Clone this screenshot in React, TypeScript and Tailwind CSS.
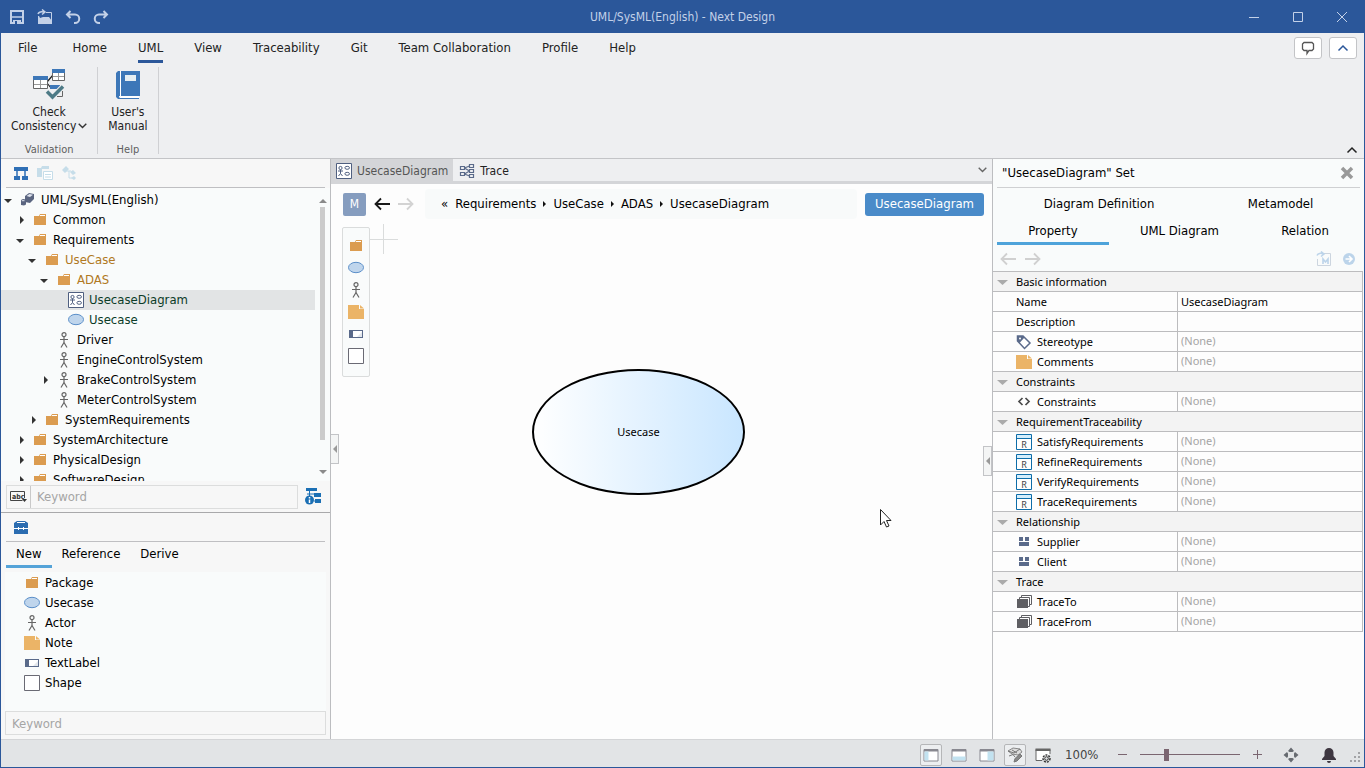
import type { ReactNode } from "react";
import clsx from "clsx";

type IconName =
  | "package"
  | "usecase"
  | "actor"
  | "note"
  | "label"
  | "shape"
  | "diagram"
  | "model"
  | "tag"
  | "code"
  | "requirement"
  | "relation"
  | "stack";

const Svg = ({ size = 16, children }: { size?: number; children: ReactNode }) => (
  <svg width={size} height={size} viewBox={`0 0 ${size} ${size}`} fill="none" className="shrink-0" aria-hidden="true">
    {children}
  </svg>
);

const icons: Record<IconName, ReactNode> = {
  package: (
    <>
      <path d="M2 4h5l1-2h6v11H2z" fill="#db9c50" />
      <path d="M8 3.5h5" stroke="#fff" />
    </>
  ),
  usecase: <ellipse cx="8" cy="7.5" rx="7.5" ry="5.2" fill="#bfd5ec" stroke="#5b8fc9" />,
  actor: (
    <g stroke="#666" strokeWidth="1.2">
      <circle cx="8" cy="2.7" r="2" />
      <path d="M8 5v5.5M4 7.5h8M8 10.5L5 15.5M8 10.5l3 5" />
    </g>
  ),
  note: (
    <>
      <path d="M0 1h11v4h5v10H0z" fill="#ebb467" />
      <path d="M12 1l4 3.500h-4z" fill="#ebb467" />
    </>
  ),
  label: (
    <>
      <path d="M1 4h14v8H1z" fill="#5a6a8a" />
      <path d="M5 5h9v6H5z" fill="#fff" />
      <path d="M14 6v5H9z" fill="#e3e7ec" />
    </>
  ),
  shape: <path d="M.5.5h15v15H.5z" fill="#fff" stroke="#6a6a74" />,
  diagram: (
    <g stroke="#4f5f80">
      <path d="M.5.5h15v15H.5z" fill="#fff" />
      <circle cx="4.500" cy="5" r="1.600" />
      <path d="M4.500 6.500v4M2 8h5M4.500 10.500L2.500 13M4.500 10.500l2 2.500" />
      <ellipse cx="11.200" cy="4.800" rx="2.300" ry="1.500" />
      <ellipse cx="11.200" cy="10.800" rx="2.300" ry="1.500" />
    </g>
  ),
  model: (
    <>
      <path d="M5 4l4-3 5 1v5l-4 4-5-1z" fill="#5a6580" />
      <path d="M6.500 4l3-2 3.500.8L10 5z" fill="#dfe4ee" />
      <path d="M1 8l2-1 3 .5v5L4 13.500l-3-.5z" fill="#5a6580" />
      <path d="M1.800 8.700h2.700" stroke="#dfe4ee" />
    </>
  ),
  tag: (
    <>
      <path d="M1.500 2v5l7 7.500 5.500-5.500-7-7z" fill="#fff" stroke="#5a6a8a" strokeWidth="1.500" />
      <path d="M1.500 2v5l2 2L8.500 3.500 7 2z" fill="#5a6a8a" />
      <circle cx="4" cy="4.500" r="1" fill="#fff" />
    </>
  ),
  code: <path d="M6.500 4L3 7.500 6.500 11M9.500 4L13 7.500 9.500 11" stroke="#4a4a4a" strokeWidth="1.700" />,
  requirement: (
    <>
      <path d="M.5.5h15v15H.5z" fill="#fff" stroke="#0e6da8" />
      <path d="M1 1h14v3.500H1z" fill="#d4eefc" />
      <path d="M1 4.500h14" stroke="#0e6da8" />
      <text x="8" y="14" textAnchor="middle" fontSize="9" fill="#444">
        R
      </text>
    </>
  ),
  relation: <path d="M3 3h4v4H3zM9 3h4v4H9zM3 8h10v4H3z" fill="#5a6a8a" />,
  stack: (
    <>
      <path d="M5.500 3V1.500h10v9H14" stroke="#5f5f63" />
      <path d="M3.500 5V3.500h10v9H12" stroke="#5f5f63" />
      <path d="M1 5h11v9H1z" fill="#5f5f63" />
    </>
  ),
};

const Icon = ({ name }: { name: IconName }) => <Svg>{icons[name]}</Svg>;

const menus = ["File", "Home", "UML", "View", "Traceability", "Git", "Team Collaboration", "Profile", "Help"];

type Node = {
  name: string;
  depth: number;
  icon: IconName;
  open?: boolean;
  tone?: string;
  selected?: boolean;
};

const tree: Node[] = [
  { name: "UML/SysML(English)", depth: 0, icon: "model", open: true },
  { name: "Common", depth: 1, icon: "package", open: false },
  { name: "Requirements", depth: 1, icon: "package", open: true },
  { name: "UseCase", depth: 2, icon: "package", open: true, tone: "text-[#b07822]" },
  { name: "ADAS", depth: 3, icon: "package", open: true, tone: "text-[#b07822]" },
  { name: "UsecaseDiagram", depth: 4, icon: "diagram", tone: "text-[#0c3c28]", selected: true },
  { name: "Usecase", depth: 4, icon: "usecase", tone: "text-[#0c3c28]" },
  { name: "Driver", depth: 3, icon: "actor" },
  { name: "EngineControlSystem", depth: 3, icon: "actor" },
  { name: "BrakeControlSystem", depth: 3, icon: "actor", open: false },
  { name: "MeterControlSystem", depth: 3, icon: "actor" },
  { name: "SystemRequirements", depth: 2, icon: "package", open: false },
  { name: "SystemArchitecture", depth: 1, icon: "package", open: false },
  { name: "PhysicalDesign", depth: 1, icon: "package", open: false },
  { name: "SoftwareDesign", depth: 1, icon: "package", open: false },
];

const indents = ["pl-0", "pl-3", "pl-6", "pl-9", "pl-12"];

const tools: { name: string; icon: IconName }[] = [
  { name: "Package", icon: "package" },
  { name: "Usecase", icon: "usecase" },
  { name: "Actor", icon: "actor" },
  { name: "Note", icon: "note" },
  { name: "TextLabel", icon: "label" },
  { name: "Shape", icon: "shape" },
];

const groups: { title: string; rows: { name: string; icon?: IconName; value?: string }[] }[] = [
  {
    title: "Basic information",
    rows: [
      { name: "Name", value: "UsecaseDiagram" },
      { name: "Description", value: "" },
      { name: "Stereotype", icon: "tag" },
      { name: "Comments", icon: "note" },
    ],
  },
  { title: "Constraints", rows: [{ name: "Constraints", icon: "code" }] },
  {
    title: "RequirementTraceability",
    rows: [
      { name: "SatisfyRequirements", icon: "requirement" },
      { name: "RefineRequirements", icon: "requirement" },
      { name: "VerifyRequirements", icon: "requirement" },
      { name: "TraceRequirements", icon: "requirement" },
    ],
  },
  {
    title: "Relationship",
    rows: [
      { name: "Supplier", icon: "relation" },
      { name: "Client", icon: "relation" },
    ],
  },
  {
    title: "Trace",
    rows: [
      { name: "TraceTo", icon: "stack" },
      { name: "TraceFrom", icon: "stack" },
    ],
  },
];

const Arrow = ({ back, color }: { back?: boolean; color: string }) => (
  <Svg>
    <path
      d={back ? "M16 8H1.500M7 2.500L1.500 8 7 13.500" : "M0 8h14.500M9 2.500L14.500 8 9 13.500"}
      stroke={color}
      strokeWidth="1.800"
    />
  </Svg>
);

const TitleBar = () => (
  <header className="grid h-[33px] shrink-0 grid-cols-3 items-center bg-[#2b579a] text-[#c3d1e8]">
    <div className="flex gap-3 pl-2">
      <button aria-label="Save">
        <Svg>
          <path d="M2 2h12v12H2z" stroke="currentColor" strokeWidth="2" />
          <path d="M2 8h12" stroke="currentColor" strokeWidth="1.500" />
          <path d="M4 11h8v4H4z" fill="currentColor" />
          <path d="M6 12h2v3H6z" fill="#2b579a" />
        </Svg>
      </button>
      <button aria-label="Open">
        <Svg>
          <path d="M9 3.500h5.500V14" stroke="currentColor" />
          <path d="M1 7h1l1 2 3-1h6l3 4v3H1z" fill="currentColor" />
          <path d="M1 5C2 2.500 5 2.500 7 3M5 .5L8 3 5 5.500" stroke="currentColor" strokeWidth="1.500" />
        </Svg>
      </button>
      <button aria-label="Undo">
        <Svg>
          <path d="M5.500 2L2 5.500 5.500 9M2 5.500h8a4 4 0 0 1 0 8.500H9" stroke="currentColor" strokeWidth="2" />
        </Svg>
      </button>
      <button aria-label="Redo">
        <Svg>
          <path d="M10.500 2L14 5.500 10.500 9M14 5.500H6a4 4 0 0 0 0 8.500h1" stroke="currentColor" strokeWidth="2" />
        </Svg>
      </button>
    </div>
    <h1 className="text-center text-xs">UML/SysML(English) - Next Design</h1>
    <div className="flex justify-end gap-7 pr-[14px]">
      <button aria-label="Minimize">
        <Svg>
          <path d="M3 8.500h10" stroke="currentColor" />
        </Svg>
      </button>
      <button aria-label="Maximize">
        <Svg>
          <path d="M3.500 3.500h9v9h-9z" stroke="currentColor" />
        </Svg>
      </button>
      <button aria-label="Close">
        <Svg>
          <path d="M3 3l10 10M13 3L3 13" stroke="currentColor" />
        </Svg>
      </button>
    </div>
  </header>
);

const RibbonGroup = ({ label, children }: { label: string; children: ReactNode }) => (
  <div className="flex flex-col items-center justify-between border-r border-[#cfd0d3] px-[10px] text-xs leading-[14px] text-[#222]">
    {children}
    <span className="text-[11px] leading-[8px] text-[#5f5f5f]">{label}</span>
  </div>
);

const Ribbon = () => (
  <section className="shrink-0 border-b border-[#c3c4c7] bg-[#eeeff1]">
    <div className="flex h-[34px] justify-between pr-[7px]">
      <nav className="flex gap-[31px] pl-[17px] text-[13px] text-[#222]">
        {menus.map((menu) => (
          <button
            key={menu}
            className={clsx(
              "h-[30px] border-b-[3px] pt-[2px] first:mr-1",
              menu === "UML" ? "border-[#2b579a]" : "border-transparent"
            )}
          >
            {menu}
          </button>
        ))}
      </nav>
      <div className="flex gap-[7px] pt-1">
        <button aria-label="Feedback" className="flex h-[22px] w-7 items-center justify-center rounded-[3px] border border-[#c3c4c7] bg-white">
          <Svg>
            <path d="M4 2.500h8l1.500 1.500v5L12 10.500H9L7 13.500v-3H4L2.500 9V4z" stroke="#555" strokeWidth="1.300" />
          </Svg>
        </button>
        <button aria-label="Fold menu" className="flex h-[22px] w-7 items-center justify-center rounded-[3px] border border-[#c3c4c7] bg-white">
          <Svg>
            <path d="M3.500 10.500L8 6l4.500 4.500" stroke="#2b579a" strokeWidth="1.500" />
          </Svg>
        </button>
      </div>
    </div>
    <div className="flex items-end justify-between">
      <div className="mb-1 flex h-[87px]">
        <RibbonGroup label="Validation">
          <button className="flex flex-col items-center">
            <svg width="34" height="32" viewBox="0 0 34 32" fill="none" className="mt-[2px] mb-1" aria-hidden="true">
              <path d="M15 13l6-7M15 14l4 5" stroke="#222" strokeWidth="1.200" />
              <path d="M1.500 7.500h14v12h-14z" fill="#fff" stroke="#666" />
              <path d="M1 7h15v4H1z" fill="#3d77b8" />
              <path d="M8.500 11v8M2 15.500h13" stroke="#999" />
              <path d="M20.500.5h12v11h-12z" fill="#fff" stroke="#666" />
              <path d="M20 0h13v4H20z" fill="#3d77b8" />
              <path d="M26.500 4v7M21 7.500h11" stroke="#999" />
              <path d="M18 16h10v4H18z" fill="#3d77b8" />
              <path d="M30.500 22v5.500H25" stroke="#666" />
              <path d="M15 22l5.500 6L30.500 17.500" stroke="#eeeff1" strokeWidth="5" />
              <path d="M15 22.500l5.500 5.500L31 17.500" stroke="#4d7a86" strokeWidth="3.500" />
            </svg>
            <span>Check</span>
            <span className="flex items-center gap-[2px]">
              Consistency
              <svg width="9" height="6" viewBox="0 0 9 6" fill="none" aria-hidden="true">
                <path d="M.7.7L4.500 4.500 8.300.7" stroke="#333" strokeWidth="1.400" />
              </svg>
            </span>
          </button>
        </RibbonGroup>
        <RibbonGroup label="Help">
          <button className="flex flex-col items-center">
            <svg width="24" height="28" viewBox="0 0 24 28" fill="none" className="mt-1 mb-[6px]" aria-hidden="true">
              <path d="M2 0h22v25H3v1h20v2H2l-2-2V2z" fill="#3d77b8" />
              <path d="M5 25h18v2H3z" fill="#fff" />
              <path d="M4.500 0v25" stroke="#fff" />
              <path d="M9 4h11v6H9z" fill="#e6eef2" />
            </svg>
            <span>User's</span>
            <span>Manual</span>
          </button>
        </RibbonGroup>
      </div>
      <button aria-label="Collapse ribbon" className="mr-1">
        <Svg>
          <path d="M3.500 10.500L8 6l4.500 4.500" stroke="#222" strokeWidth="1.500" />
        </Svg>
      </button>
    </div>
  </section>
);

const Toggle = ({ open }: { open: boolean }) => (
  <button aria-label={open ? "Collapse" : "Expand"} className="flex w-[14px] justify-center">
    <svg width="14" height="8" viewBox="0 0 14 8" aria-hidden="true">
      <path d={open ? "M3 3h8L7 7z" : "M7 0v8l4-4z"} fill="#333" />
    </svg>
  </button>
);

const ModelTree = () => (
  <section className="flex min-h-0 flex-1 flex-col">
    <div className="mx-[5px] flex h-[29px] shrink-0 items-center gap-2 border-b border-[#bfbfc2] pl-[7px]">
      <button aria-label="Structure">
        <Svg>
          <path d="M1 2h14v4H1zM1 11h6v4H1zM9 11h6v4H9z" fill="#2f6fb5" />
          <path d="M4 6v5M12 6v5" stroke="#2f6fb5" strokeWidth="1.500" />
        </Svg>
      </button>
      <button aria-label="Pages">
        <Svg>
          <path d="M0 3h4l1-2h7v3H5v8H0z" fill="#c6dde9" />
          <path d="M6.500 6.500h9v8h-9z" fill="#fff" stroke="#c6dde9" />
          <path d="M8 9.500h6M8 12h6" stroke="#c6dde9" />
        </Svg>
      </button>
      <button aria-label="Links">
        <Svg>
          <path d="M1 5l4-4 3 3-4 4zM9 7l3-2 3 3-3 2zM10 13l3-2 2 2-2 2z" fill="#c6dde9" />
          <path d="M5 6h5M8 6v7h3" stroke="#c6dde9" />
        </Svg>
      </button>
    </div>
    <div className="flex min-h-0 flex-1 bg-[#f9fbfb] pt-[2px]">
      <ul className="min-w-0 flex-1 overflow-hidden text-[13px] leading-5">
        {tree.map((node) => (
          <li
            key={node.name}
            className={clsx(
              "flex h-5 items-center gap-[5px]",
              indents[node.depth],
              node.selected && "bg-[#e2e4e5]",
              node.tone ?? "text-black"
            )}
          >
            {node.open === undefined ? <span className="w-[14px]" /> : <Toggle open={node.open} />}
            <Icon name={node.icon} />
            <span>{node.name}</span>
          </li>
        ))}
      </ul>
      <div className="flex w-[15px] flex-col items-center pt-1 pb-[2px]">
        <svg width="8" height="5" viewBox="0 0 8 5" className="mt-1" aria-hidden="true">
          <path d="M0 5l4-4 4 4z" fill="#8a8a8a" />
        </svg>
        <div className="mt-1 mb-[30px] w-[5px] flex-1 bg-[#cbcbcb]" />
        <svg width="8" height="5" viewBox="0 0 8 5" className="mb-1" aria-hidden="true">
          <path d="M0 0h8L4 4z" fill="#8a8a8a" />
        </svg>
      </div>
    </div>
    <div className="flex h-[31px] shrink-0 items-center gap-[7px] px-[5px]">
      <div className="flex h-6 min-w-0 flex-1 items-center border border-[#dcdddd]">
        <button aria-label="Match mode" className="flex h-full w-6 items-center justify-center border-r border-[#c9c9c9]">
          <svg width="17" height="12" viewBox="0 0 17 12" fill="none" aria-hidden="true">
            <path d="M14.500 7V.5H.5v9h12" stroke="#444" />
            <text x="2" y="8" fontSize="7" fontWeight="700" fill="#333">
              abc
            </text>
            <path d="M12 8h5l-2.500 3z" fill="#333" />
          </svg>
        </button>
        <input
          aria-label="Search model"
          placeholder="Keyword"
          className="min-w-0 flex-1 bg-transparent px-[6px] text-[13px] outline-none placeholder:text-[#a5a5a5]"
        />
      </div>
      <button aria-label="Search options" className="mr-[3px]">
        <svg width="17" height="17" viewBox="0 0 17 17" fill="none" aria-hidden="true">
          <path d="M1 0h11v3H1zM9 5h7v4H9zM10 11h6v4h-6z" fill="#1b6fb4" />
          <path d="M4.500 3v5M2 6h7M9 13h2" stroke="#1b6fb4" />
          <circle cx="4.500" cy="12" r="4.500" fill="#1b6fb4" />
          <path d="M4.500 9v1.500M4.500 11.500v3.500" stroke="#fff" strokeWidth="1.500" />
        </svg>
      </button>
    </div>
  </section>
);

const Toolbox = () => (
  <section className="flex h-[227px] shrink-0 flex-col border-t border-[#a9a9ab] px-1">
    <div className="mx-px flex h-[29px] shrink-0 items-center border-b border-[#bfbfc2] pl-[7px]">
      <button aria-label="Toolbox">
        <Svg>
          <path d="M1 4l3-2h8l3 2v11H1z" fill="#2b6cb0" />
          <path d="M4 3.500h8M1 9.500h14" stroke="#fff" />
          <path d="M5.500 8v3M10.500 8v3" stroke="#fff" />
        </Svg>
      </button>
    </div>
    <div className="mx-px flex h-[30px] shrink-0 text-[13px] leading-5">
      <button className="h-[26px] border-b-[3px] border-[#55a3d8] px-[10px]">New</button>
      <button className="h-[26px] border-b-[3px] border-transparent px-[10px]">Reference</button>
      <button className="h-[26px] border-b-[3px] border-transparent px-[10px]">Derive</button>
    </div>
    <ul className="flex-1 bg-[#f9fbfb] pt-px text-[13px] leading-5">
      {tools.map((tool) => (
        <li key={tool.name} className="flex h-5 items-center gap-[5px] pl-[19px]">
          <Icon name={tool.icon} />
          {tool.name}
        </li>
      ))}
    </ul>
    <input
      aria-label="Search toolbox"
      placeholder="Keyword"
      className="mb-1 h-6 border border-[#dcdddd] bg-[#f7f7f7] px-[6px] text-[13px] outline-none placeholder:text-[#a5a5a5]"
    />
  </section>
);

const crumbs = ["Requirements", "UseCase", "ADAS", "UsecaseDiagram"];

const Editor = () => (
  <main className="relative flex min-w-0 flex-1 flex-col bg-[#fdfdfd]">
    <div className="flex h-[25px] shrink-0 items-center justify-between border-b-[3px] border-[#d4d5d8] bg-[#eeeff1] pr-[5px]">
      <div className="flex h-full text-xs">
        <button className="flex items-center gap-[5px] bg-[#d4d5d8] px-[5px] pt-[2px] text-[#555]">
          <Icon name="diagram" />
          UsecaseDiagram
        </button>
        <button className="flex items-center gap-[5px] px-[6px] pt-[2px] text-[#222]">
          <Svg>
            <g stroke="#5a6a8a" strokeWidth="1.200">
              <path d="M1.500 3.500h4v3h-4zM1.500 9.500h4v3h-4zM10.500 1.500h4v3h-4zM10.500 6.500h4v3h-4zM10.500 11.500h4v3h-4z" />
              <path d="M5.500 5l5-2M5.500 5l5 3M5.500 11l5-3M5.500 11l5 2" />
            </g>
          </Svg>
          Trace
        </button>
      </div>
      <button aria-label="Tab list">
        <svg width="9" height="6" viewBox="0 0 9 6" fill="none" aria-hidden="true">
          <path d="M.7.7L4.500 4.500 8.300.7" stroke="#666" strokeWidth="1.400" />
        </svg>
      </button>
    </div>

    <div className="flex h-10 shrink-0 items-center gap-2 px-2 pl-3">
      <button className="h-[23px] w-[23px] rounded-[2px] bg-[#869dbf] text-xs text-white">M</button>
      <button aria-label="Back">
        <Arrow back color="#1a1a1a" />
      </button>
      <button aria-label="Forward">
        <Arrow color="#d3d3d3" />
      </button>
      <nav className="ml-[3px] flex h-[30px] min-w-0 flex-1 items-center gap-[7px] rounded bg-[#f8fafa] pl-4 text-[13px]">
        <span>«</span>
        {crumbs.map((crumb, i) => (
          <span key={crumb} className="flex items-center gap-[7px]">
            <a href="#">{crumb}</a>
            {i < crumbs.length - 1 && (
              <svg width="3" height="6" viewBox="0 0 3 6" aria-hidden="true">
                <path d="M0 0v6l3-3z" fill="#111" />
              </svg>
            )}
          </span>
        ))}
      </nav>
      <button className="h-[23px] rounded-[3px] bg-[#4a8bc9] px-[10px] text-[13px] text-white">UsecaseDiagram</button>
    </div>

    <div className="mt-[3px] ml-[11px] flex h-[150px] w-7 flex-col items-center gap-[6px] rounded-[2px] border border-[#dadcdc] bg-[#f9fbfb] pt-[10px]">
      {tools.map((tool) => (
        <button key={tool.name} aria-label={tool.name} title={tool.name}>
          <Icon name={tool.icon} />
        </button>
      ))}
    </div>

    {/* canvas origin */}
    <div className="absolute top-[80px] left-[39px] h-px w-7 bg-[#dadcdc]" />
    <div className="absolute top-[65px] left-[52px] h-[30px] w-px bg-[#dadcdc]" />

    <div className="absolute top-[210px] left-[201px] flex h-[126px] w-[213px] items-center justify-center rounded-[50%] border-2 border-black bg-linear-to-r from-white to-[#c9e6ff] font-['Noto_Sans',sans-serif] text-[11px]">
      Usecase
    </div>

    <svg width="12" height="19" viewBox="0 0 12 19" className="absolute top-[350px] left-[549px]" aria-hidden="true">
      <path d="M.5.5v15.500l3.500-3.500 2.500 5.500 2.500-1-2.500-5.500h4.500z" fill="#fff" stroke="#222" />
    </svg>

    <button
      aria-label="Fold left panel"
      className="absolute top-[275px] left-0 flex h-[30px] w-2 items-center justify-center border border-l-0 border-[#c3c4c7] bg-[#f4f5f5]"
    >
      <svg width="4" height="8" viewBox="0 0 4 8" className="shrink-0" aria-hidden="true">
        <path d="M4 0v8L0 4z" fill="#999" />
      </svg>
    </button>
    <button
      aria-label="Fold right panel"
      className="absolute top-[287px] right-0 flex h-[30px] w-[9px] items-center justify-center border border-[#c3c4c7] bg-[#f4f5f5]"
    >
      <svg width="4" height="8" viewBox="0 0 4 8" className="shrink-0" aria-hidden="true">
        <path d="M4 0v8L0 4z" fill="#999" />
      </svg>
    </button>
  </main>
);

const Inspector = () => (
  <aside className="flex w-[372px] shrink-0 flex-col border-l border-[#bcbdc0] bg-[#f9fbfb]">
    <div className="mx-1 flex h-[29px] shrink-0 items-center justify-between border-b border-[#cfd0d2] pr-[6px] pl-[5px]">
      <h2 className="text-[13px]">"UsecaseDiagram" Set</h2>
      <button aria-label="Close panel">
        <svg width="14" height="14" viewBox="0 0 14 14" fill="none" aria-hidden="true">
          <path d="M2 2l10 10M12 2L2 12" stroke="#999" strokeWidth="3.500" />
        </svg>
      </button>
    </div>
    <div className="mx-1 flex h-8 shrink-0 text-[13px]">
      <button className="flex-auto">Diagram Definition</button>
      <button className="flex-auto">Metamodel</button>
    </div>
    <div className="mx-1 flex h-[25px] shrink-0 text-[13px] leading-5">
      <button className="flex-auto border-b-[3px] border-[#4ea3da]">Property</button>
      <button className="flex-auto border-b-[3px] border-transparent">UML Diagram</button>
      <button className="flex-auto border-b-[3px] border-transparent">Relation</button>
    </div>
    <div className="flex h-[26px] shrink-0 items-center justify-between px-[7px] pt-px">
      <div className="flex gap-[9px]">
        <button aria-label="Previous">
          <Arrow back color="#d0d0d0" />
        </button>
        <button aria-label="Next">
          <Arrow color="#d0d0d0" />
        </button>
      </div>
      <div className="flex gap-[9px]">
        <button aria-label="Open metamodel">
          <Svg>
            <path d="M8 2.500h6.500v12H1.500V8" stroke="#ccd5df" />
            <path d="M1 4.500C2 2 5 2 7 3M5 .5L8 3 5 5.500" stroke="#bcd4ea" strokeWidth="1.500" />
            <path d="M7 13V8l2.500 3L12 8v5" stroke="#bcd4ea" strokeWidth="1.600" />
          </Svg>
        </button>
        <button aria-label="Go to">
          <Svg>
            <circle cx="8" cy="8" r="6" fill="#bcd4ea" />
            <path d="M4.500 8h6M8 5l3 3-3 3" stroke="#fff" strokeWidth="1.600" />
          </Svg>
        </button>
      </div>
    </div>
    <div className="min-h-0 flex-1 bg-[#fdfdfd]">
      <table className="w-[370px] table-fixed border-separate border-spacing-0 border-t border-[#bcbcbe] font-['Noto_Sans',sans-serif] text-[11px]">
        {groups.map((group) => (
          <tbody key={group.title}>
            <tr>
              <th colSpan={2} className="h-5 border-r border-b border-[#bcbcbe] bg-[#f3f3f3] p-0 text-left font-normal">
                <button className="flex h-[19px] items-center gap-2 pt-px pl-1">
                  <svg width="11" height="6" viewBox="0 0 11 6" aria-hidden="true">
                    <path d="M0 1h11L5.500 6z" fill="#aaa" />
                  </svg>
                  {group.title}
                </button>
              </th>
            </tr>
            {group.rows.map((row) => (
              <tr key={row.name}>
                <th className="h-5 border-r border-b border-[#bcbcbe] p-0 pl-[23px] text-left font-normal">
                  <div className="flex h-[19px] items-center gap-[5px] pt-px">
                    {row.icon && <Icon name={row.icon} />}
                    {row.name}
                  </div>
                </th>
                <td className="h-5 border-r border-b border-[#bcbcbe] p-0 px-[3px]">
                  {row.value === undefined ? (
                    <span className="block text-[#a5a5a5]">(None)</span>
                  ) : (
                    <input aria-label={row.name} defaultValue={row.value} className="block h-[19px] w-full bg-transparent outline-none" />
                  )}
                </td>
              </tr>
            ))}
          </tbody>
        ))}
      </table>
    </div>
  </aside>
);

const StatusBar = () => (
  <footer className="flex h-[28px] shrink-0 items-center justify-end border-t border-[#d4d5d7] bg-[#e2e4e6] pt-[2px] pr-[3px] text-[#7a6570]">
    <div className="flex gap-[6px]">
      <button aria-label="Left pane" className="flex h-[22px] w-[22px] items-center justify-center rounded-[2px] border border-[#b5b6b8] bg-[#eceef0]">
        <Svg>
          <path d="M1 2.500h14v11.500H1z" fill="#fff" stroke="#888890" />
          <path d="M1 2h14v2.500H1z" fill="#888890" />
          <path d="M1.500 4.500h4v9h-4z" fill="#c2e2f0" />
        </Svg>
      </button>
      <button aria-label="Bottom pane" className="flex h-[22px] w-[22px] items-center justify-center">
        <Svg>
          <path d="M1 2.500h14v11.500H1z" fill="#fff" stroke="#888890" />
          <path d="M1 2h14v2.500H1z" fill="#888890" />
          <path d="M1.500 9.500h13v4h-13z" fill="#c2e2f0" />
        </Svg>
      </button>
      <button aria-label="Right pane" className="flex h-[22px] w-[22px] items-center justify-center">
        <Svg>
          <path d="M1 2.500h14v11.500H1z" fill="#fff" stroke="#888890" />
          <path d="M1 2h14v2.500H1z" fill="#888890" />
          <path d="M8.500 4.500h6v9h-6z" fill="#c2e2f0" />
        </Svg>
      </button>
      <button aria-label="Format painter" className="flex h-[22px] w-[22px] items-center justify-center rounded-[2px] border border-[#b5b6b8] bg-[#eceef0]">
        <Svg>
          <path d="M1 4l5-3 7 1 2 3-4 3-6-1z" fill="#ddd" stroke="#888" />
          <path d="M1 4l6 2 6-4M5 3l5 3M2 9l4-1.500L8 10" stroke="#777" />
          <path d="M7 15l1-3.500L13 7l2 2-5 5z" fill="#888" stroke="#777" />
        </Svg>
      </button>
      <button aria-label="View settings" className="flex h-[22px] w-[22px] items-center justify-center">
        <Svg>
          <path d="M7 13.500H1V2.500h14V7" fill="#fff" stroke="#666" />
          <path d="M.5 1.500h15v2.500H.5z" fill="#666" />
          <circle cx="11.500" cy="11.500" r="3.500" stroke="#333" strokeWidth="1.500" strokeDasharray="2 1" />
          <circle cx="11.500" cy="11.500" r="1.800" stroke="#333" />
        </Svg>
      </button>
    </div>
    <span className="ml-[11px] w-[52px] text-[13px] text-[#444]">100%</span>
    <button aria-label="Zoom out">
      <svg width="11" height="11" viewBox="0 0 11 11" aria-hidden="true">
        <path d="M1 5.500h9" stroke="currentColor" />
      </svg>
    </button>
    <input
      type="range"
      aria-label="Zoom"
      defaultValue={25}
      className="mx-3 h-3 w-[100px] appearance-none bg-linear-to-b from-transparent from-50% via-[#7a6570] via-50% to-transparent bg-[length:100%_1px] bg-transparent bg-center bg-no-repeat [&::-webkit-slider-runnable-track]:h-3 [&::-webkit-slider-runnable-track]:border-0 [&::-webkit-slider-thumb]:h-3 [&::-webkit-slider-thumb]:w-[5px] [&::-webkit-slider-thumb]:appearance-none [&::-webkit-slider-thumb]:bg-[#7a6570]"
    />
    <button aria-label="Zoom in">
      <svg width="11" height="11" viewBox="0 0 11 11" aria-hidden="true">
        <path d="M1 5.500h9M5.500 1v9" stroke="currentColor" />
      </svg>
    </button>
    <button aria-label="Fit" className="ml-5">
      <Svg>
        <path
          d="M8 .5L11 4 9.500 5h-3L5 4zM8 15.500L5 12l1.500-1h3l1.500 1zM.5 8L4 5l1 1.500v3L4 11zM15.500 8L12 11l-1-1.500v-3L12 5z"
          fill="#666a70"
        />
      </Svg>
    </button>
    <button aria-label="Notifications" className="ml-[22px]">
      <Svg>
        <path d="M8 1a4.500 4.500 0 0 1 4.500 4.500V9l2.500 3v1H1v-1l2.500-3V5.500A4.500 4.500 0 0 1 8 1zM6 14h4a2 2 0 0 1-4 0z" fill="#3d3640" />
      </Svg>
    </button>
    <svg width="11" height="11" viewBox="0 0 11 11" className="mt-[6px] ml-[13px]" aria-hidden="true">
      <path d="M8 0h2v2H8zM4 4h2v2H4zM8 4h2v2H8zM0 8h2v2H0zM4 8h2v2H4zM8 8h2v2H8z" fill="#a2a3a6" />
    </svg>
  </footer>
);

const App = () => (
  <div className="flex h-screen flex-col overflow-hidden border-x border-b border-[#2b579a] bg-[#f7f7f7] font-['DejaVu_Sans_Condensed','DejaVu_Sans',sans-serif] text-black">
    <TitleBar />
    <Ribbon />
    <div className="flex min-h-0 flex-1">
      <div className="flex w-[330px] shrink-0 flex-col border-r border-[#bcbdc0]">
        <ModelTree />
        <Toolbox />
      </div>
      <Editor />
      <Inspector />
    </div>
    <StatusBar />
  </div>
);

export default App;
